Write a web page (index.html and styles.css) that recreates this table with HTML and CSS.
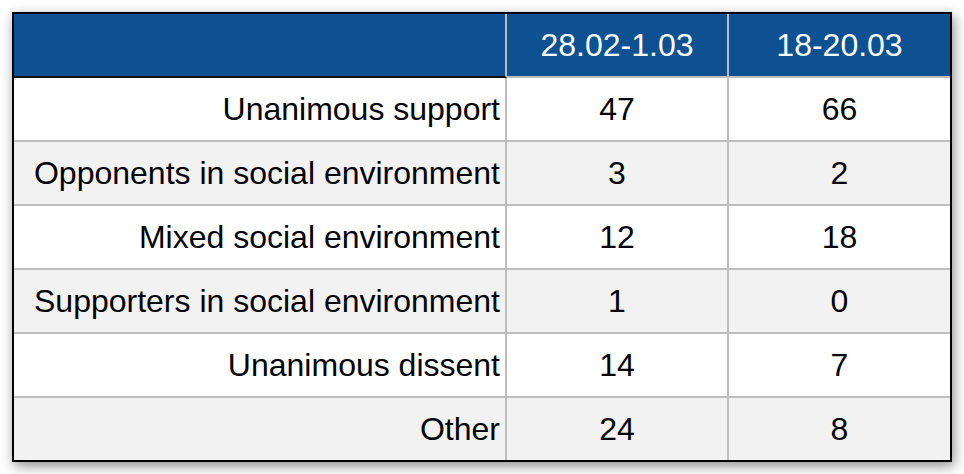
FILE: index.html
```html
<!DOCTYPE html>
<html>
<head>
<meta charset="utf-8">
<link rel="stylesheet" href="styles.css">
</head>
<body>
<div class="frame">
  <table class="data">
    <colgroup>
      <col class="c1"><col class="c2"><col class="c3">
    </colgroup>
    <thead>
      <tr class="head">
        <th class="label"></th>
        <th>28.02-1.03</th>
        <th>18-20.03</th>
      </tr>
    </thead>
    <tbody>
      <tr><td class="label">Unanimous support</td><td>47</td><td>66</td></tr>
      <tr><td class="label">Opponents in social environment</td><td>3</td><td>2</td></tr>
      <tr><td class="label">Mixed social environment</td><td>12</td><td>18</td></tr>
      <tr><td class="label">Supporters in social environment</td><td>1</td><td>0</td></tr>
      <tr><td class="label">Unanimous dissent</td><td>14</td><td>7</td></tr>
      <tr><td class="label">Other</td><td>24</td><td>8</td></tr>
    </tbody>
  </table>
</div>
</body>
</html>
```
FILE: styles.css
```css
html, body {
  margin: 0;
  padding: 0;
  background: #ffffff;
}
body {
  padding: 12px;
  font-family: "Liberation Sans", Arial, sans-serif;
}
.frame {
  width: 936px;
  border: 2px solid #000;
  box-shadow: 2px 4px 12px rgba(0, 0, 0, 0.45);
  background: #fff;
}
.data {
  width: 936px;
  border-collapse: separate;
  border-spacing: 0;
  table-layout: fixed;
  font-size: 32px;
  color: #000;
}
.c1 { width: 493px; }
.c2 { width: 222px; }
.c3 { width: 221px; }
.data th, .data td {
  padding: 0;
  text-align: center;
  vertical-align: middle;
  border-right: 2px solid #bdbdbd;
  border-bottom: 2px solid #bdbdbd;
  box-sizing: border-box;
  white-space: nowrap;
}
.data tr > :last-child { border-right: none; }
.head th {
  background: #0d5192;
  color: #fff;
  font-weight: normal;
  height: 64px;
}
.head th.label { border-bottom-color: #111; }
.data td { height: 64px; }
.data tbody tr:last-child td { border-bottom: none; height: 62px; }
.data td.label {
  text-align: right;
  padding-right: 5px;
}
.data tbody tr:nth-child(even) td { background: #f2f2f2; }
```
